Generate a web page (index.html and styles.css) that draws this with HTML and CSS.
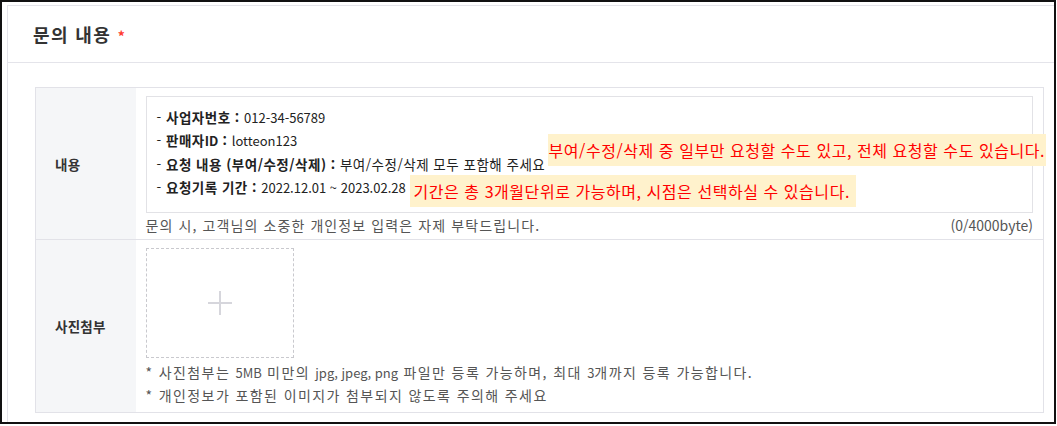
FILE: index.html
```html
<!DOCTYPE html>
<html lang="ko">
<head>
    <meta charset="UTF-8">
    <meta name="viewport" content="width=device-width, initial-scale=1.0">
    <title>문의 내용</title>
    <link rel="stylesheet" href="styles.css">
</head>
<body>
    <div class="frame">
        <div class="panel">
            <div class="panel-head">
                <h2>문의 내용 <span class="req">*</span></h2>
            </div>
            <div class="panel-body">
                <table class="form-table">
                    <tr>
                        <th>내용</th>
                        <td>
                            <div class="memo">
                                <p>- <b>사업자번호 :</b> <span class="en">012-34-56789</span></p>
                                <p>- <b>판매자<span class="en">ID</span> :</b> <span class="en">lotteon123</span></p>
                                <p>- <b>요청 내용 (부여/수정/삭제) :</b> 부여/수정/삭제 모두 포함해 주세요</p>
                                <p>- <b>요청기록 기간 :</b> <span class="en">2022.12.01 ~ 2023.02.28</span></p>
                                <span class="note note-1">부여/수정/삭제 중 일부만 요청할 수도 있고, 전체 요청할 수도 있습니다.</span>
                                <span class="note note-2">기간은 총 3개월단위로 가능하며, 시점은 선택하실 수 있습니다.</span>
                            </div>
                            <div class="memo-foot">
                                <span>문의 시, 고객님의 소중한 개인정보 입력은 자제 부탁드립니다.</span>
                                <span class="count">(0/4000byte)</span>
                            </div>
                        </td>
                    </tr>
                    <tr>
                        <th>사진첨부</th>
                        <td>
                            <div class="upload">
                                <svg width="26" height="26" viewBox="0 0 26 26">
                                    <path d="M13 1v24M1 13h24" stroke="#d6d6dc" stroke-width="2" fill="none"/>
                                </svg>
                            </div>
                            <ul class="guide">
                                <li>* 사진첨부는 <span class="en">5MB</span> 미만의 <span class="en">jpg, jpeg, png</span> 파일만 등록 가능하며, 최대 <span class="en">3</span>개까지 등록 가능합니다.</li>
                                <li>* 개인정보가 포함된 이미지가 첨부되지 않도록 주의해 주세요</li>
                            </ul>
                        </td>
                    </tr>
                </table>
            </div>
        </div>
    </div>
</body>
</html>
```

FILE: styles.css
```css
body {
    margin: 0;
    padding: 0;
    background-color: #fff;
    font-family: "Noto Sans CJK KR", "Noto Sans", sans-serif;
    color: #222;
}

.frame {
    width: 1056px;
    height: 424px;
    box-sizing: border-box;
    border: 2px solid #111;
    padding: 3px 0 0 5px;
    overflow: hidden;
}

.panel {
    width: 1063px;
    height: 100%;
    border: 1px solid #e4e4ea;
    border-bottom: none;
}

.panel-head {
    height: 56px;
    padding: 0 25px;
    display: flex;
    align-items: center;
    border-bottom: 1px solid #e4e4ea;
}

.panel-head h2 {
    margin: 0;
    font-size: 18px;
    font-weight: 700;
    letter-spacing: 1.4px;
    color: #333;
}

.req {
    color: #ff3b30;
    font-size: 14px;
    letter-spacing: 0;
}

.panel-body {
    padding: 24px 27px 0;
}

.form-table {
    width: 100%;
    border-collapse: collapse;
    border: 1px solid #e2e2e8;
}

.form-table tr + tr {
    border-top: 1px solid #e2e2e8;
}

.form-table th {
    width: 100px;
    background-color: #f5f6f8;
    text-align: left;
    padding: 0 0 0 19px;
    font-size: 13.5px;
    letter-spacing: 0.25px;
    font-weight: 700;
    color: #333;
    box-sizing: border-box;
}

.form-table td {
    padding: 8px 10px 0;
    vertical-align: top;
}

.en {
    font-size: 13px;
    letter-spacing: 0;
}

.memo {
    position: relative;
    height: 117px;
    border: 1px solid #e2e2e6;
    padding: 9px 10px;
    box-sizing: border-box;
    font-size: 13.5px;
    letter-spacing: 0.5px;
}

.memo p {
    margin: 0;
    line-height: 23.4px;
    color: #222;
}

.note {
    position: absolute;
    background-color: #fff2cc;
    color: #ff0000;
    font-size: 16px;
    letter-spacing: 0.55px;
    line-height: 32px;
    white-space: nowrap;
}

.note-1 {
    left: 401px;
    top: 37px;
    padding: 0 1px 0 1px;
}

.note-2 {
    left: 263px;
    top: 78px;
    padding: 0 6px 0 4px;
}

.memo-foot {
    display: flex;
    justify-content: space-between;
    font-size: 14px;
    letter-spacing: 1.1px;
    color: #555;
    line-height: 24px;
    padding-bottom: 2px;
}

.memo-foot .count {
    letter-spacing: 0;
}

.upload {
    width: 148px;
    height: 110px;
    box-sizing: border-box;
    border: 1px dashed #c9c9ce;
    display: flex;
    align-items: center;
    justify-content: center;
}

.guide {
    list-style: none;
    margin: 3px 0 0;
    padding: 0 0 5px;
    font-size: 14px;
    letter-spacing: 1.4px;
    line-height: 23px;
    color: #555;
}
```
